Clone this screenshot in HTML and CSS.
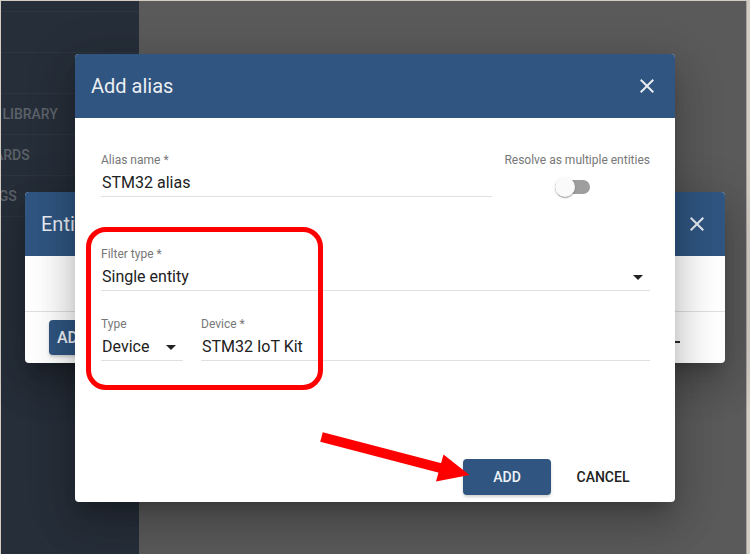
FILE: index.html
```html
<!DOCTYPE html>
<html lang="en">
<head>
<meta charset="utf-8">
<title>Add alias</title>
<link rel="stylesheet" href="styles.css">
</head>
<body>
<div class="app">
  <aside class="sidebar">
    <nav class="menu">
      <div class="menu-item"></div>
      <div class="menu-item"></div>
      <div class="menu-item">Widgets Library</div>
      <div class="menu-item">Dashboards</div>
      <div class="menu-item">Audit Logs</div>
      <div class="menu-item"></div>
    </nav>
  </aside>
  <main class="content"></main>
</div>

<section class="dialog dialog-back">
  <header class="dialog-header">
    <h2 class="dialog-title">Entity aliases</h2>
    <svg class="close-icon" viewBox="0 0 24 24" width="24" height="24"><path d="M19 6.41L17.59 5 12 10.59 6.41 5 5 6.41 10.59 12 5 17.59 6.41 19 12 13.41 17.59 19 19 17.59 13.41 12z"/></svg>
  </header>
  <div class="back-body"></div>
  <div class="back-actions">
    <button class="btn btn-primary btn-large">ADD ALIAS</button>
    <span class="back-dash"></span>
  </div>
</section>

<section class="dialog dialog-front">
  <header class="dialog-header">
    <h2 class="dialog-title">Add alias</h2>
    <svg class="close-icon" viewBox="0 0 24 24" width="24" height="24"><path d="M19 6.41L17.59 5 12 10.59 6.41 5 5 6.41 10.59 12 5 17.59 6.41 19 12 13.41 17.59 19 19 17.59 13.41 12z"/></svg>
  </header>
  <div class="dialog-body">
    <div class="row row-alias">
      <div class="field field-grow">
        <div class="field-label">Alias name *</div>
        <div class="field-value">STM32 alias</div>
      </div>
      <div class="resolve">
        <div class="field-label">Resolve as multiple entities</div>
        <div class="toggle">
          <div class="track"></div>
          <div class="thumb"></div>
        </div>
      </div>
    </div>
    <div class="field field-filter">
      <div class="field-label">Filter type *</div>
      <div class="field-value select-value"><span>Single entity</span><span class="caret"></span></div>
    </div>
    <div class="row row-device">
      <div class="field field-type">
        <div class="field-label">Type</div>
        <div class="field-value select-value"><span>Device</span><span class="caret"></span></div>
      </div>
      <div class="field field-grow">
        <div class="field-label">Device *</div>
        <div class="field-value">STM32 IoT Kit</div>
      </div>
    </div>
  </div>
  <div class="dialog-actions">
    <button class="btn btn-primary">ADD</button>
    <button class="btn btn-flat">CANCEL</button>
  </div>
</section>

<div class="highlight"></div>
<svg class="arrow" viewBox="0 0 750 554" width="750" height="554">
  <line x1="321.5" y1="437" x2="446" y2="469.5" stroke="#ff0000" stroke-width="10"/>
  <polygon points="443.5,454.5 469.5,475 436,481.5" fill="#ff0000"/>
</svg>
</body>
</html>
```

FILE: styles.css
```css
html, body {
  margin: 0;
  padding: 0;
}
body {
  width: 750px;
  height: 554px;
  overflow: hidden;
  background: #d2ccc3;
  font-family: Roboto, "Liberation Sans", Arial, sans-serif;
  position: relative;
}

.app {
  display: flex;
  margin: 1px 0 0 1px;
  width: 746px;
  height: 553px;
}

.sidebar {
  width: 138px;
  background: #262e39;
  overflow: hidden;
  flex: none;
}
.menu {
  margin: 10px 0 0 -62px;
  width: 200px;
}
.menu-item {
  height: 40px;
  line-height: 40px;
  border-top: 1px solid #2c3540;
  color: #5c6269;
  font-size: 14px;
  font-weight: 500;
  text-transform: uppercase;
  white-space: nowrap;
}

.content {
  flex: 1;
  background: #5a5a5a;
  border-right: 1px solid #a4a4a4;
}

/* dialogs */
.dialog {
  position: absolute;
  background: #fff;
  border-radius: 4px;
  overflow: hidden;
  display: flex;
  flex-direction: column;
  box-shadow: 0 11px 15px -7px rgba(0,0,0,.2), 0 24px 38px 3px rgba(0,0,0,.14), 0 9px 46px 8px rgba(0,0,0,.12);
}
.dialog-header {
  height: 64px;
  flex: none;
  background: #2f5580;
  display: flex;
  align-items: center;
  justify-content: space-between;
  padding: 0 16px;
}
.dialog-title {
  margin: 0;
  font-size: 20px;
  font-weight: 400;
  color: rgba(255,255,255,0.92);
  white-space: nowrap;
}
.close-icon {
  display: block;
  fill: #e9edf2;
}

.dialog-back {
  left: 25px;
  top: 192px;
  width: 700px;
  height: 171px;
}
.back-body {
  height: 55px;
}
.back-actions {
  border-top: 1px solid #e0e0e0;
  padding: 8px 45px 0 24px;
  display: flex;
  justify-content: space-between;
  align-items: flex-start;
}
.back-dash {
  width: 20px;
  height: 2px;
  margin-top: 21px;
  background: #2a2a2a;
}

.dialog-front {
  left: 75px;
  top: 54px;
  width: 600px;
  height: 448px;
}
.dialog-body {
  flex: 1;
  padding: 33px 25px 0 26px;
}

.row {
  display: flex;
  align-items: flex-start;
}
.row-alias {
  gap: 12px;
}
.row-device {
  gap: 18px;
  margin-top: 24px;
}
.field {
  padding-top: 2px;
  border-bottom: 1px solid #e0e0e0;
}
.field-grow {
  flex: 1;
}
.field-filter {
  margin-top: 48px;
}
.field-type {
  width: 82px;
  flex: none;
}
.field-label {
  font-size: 12px;
  line-height: 14px;
  color: #777;
  white-space: nowrap;
}
.field-value {
  margin-top: 6px;
  padding: 0 0 3px 1px;
  font-size: 16px;
  line-height: 20px;
  color: #212121;
  white-space: nowrap;
}
.select-value {
  display: flex;
  align-items: center;
  justify-content: space-between;
}
.caret {
  width: 0;
  height: 0;
  border-left: 5px solid transparent;
  border-right: 5px solid transparent;
  border-top: 5px solid #222;
  margin-right: 7px;
}

.resolve {
  display: flex;
  flex-direction: column;
  align-items: center;
  padding-top: 2px;
}
.toggle {
  position: relative;
  width: 45px;
  height: 20px;
  margin-top: 10px;
}
.track {
  margin-top: 3px;
  width: 35px;
  height: 14px;
  border-radius: 7px;
  background: #9e9e9e;
}
.thumb {
  position: absolute;
  left: 0;
  top: 0;
  width: 20px;
  height: 20px;
  border-radius: 50%;
  background: #fafafa;
  box-shadow: 0 2px 1px -1px rgba(0,0,0,.2), 0 1px 1px 0 rgba(0,0,0,.14), 0 1px 3px 0 rgba(0,0,0,.12);
}

.dialog-actions {
  display: flex;
  justify-content: flex-end;
  gap: 8px;
  padding: 0 28px 7px 0;
}
.btn {
  font-family: Roboto, "Liberation Sans", Arial, sans-serif;
  font-size: 14px;
  font-weight: 500;
  min-width: 88px;
  height: 36px;
  padding: 0 16px;
  border: none;
  border-radius: 4px;
  background: transparent;
  color: #212121;
  white-space: nowrap;
}
.btn-primary {
  background: #2f5580;
  color: #eef2f6;
  box-shadow: 0 2px 3px rgba(0,0,0,.18);
}
.btn-large {
  height: 35px;
  font-size: 16px;
  padding: 0 8px;
  text-align: left;
}

/* annotations */
.highlight {
  position: absolute;
  left: 86px;
  top: 227px;
  width: 237px;
  height: 163px;
  box-sizing: border-box;
  border: 5px solid #ff0000;
  border-radius: 20px;
}
.arrow {
  position: absolute;
  left: 0;
  top: 0;
  pointer-events: none;
}
```
